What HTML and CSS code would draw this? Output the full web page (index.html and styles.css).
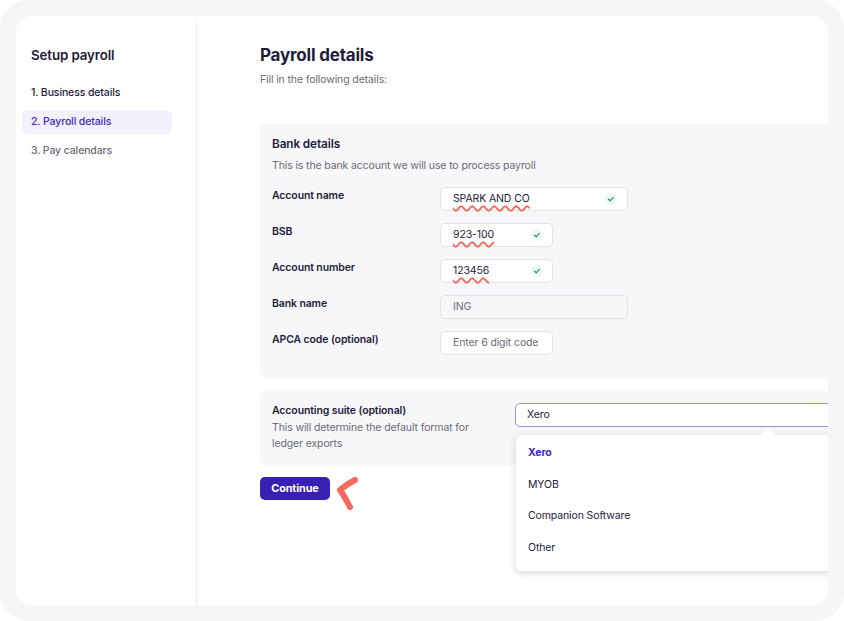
FILE: index.html
```html
<!DOCTYPE html>
<html>
<head>
<meta charset="utf-8">
<link rel="stylesheet" href="styles.css">
</head>
<body>
<div class="frame">
  <div class="panel">
    <aside class="sidebar">
      <h2 class="side-title">Setup payroll</h2>
      <ul class="steps">
        <li class="step">1. Business details</li>
        <li class="step active">2. Payroll details</li>
        <li class="step muted">3. Pay calendars</li>
      </ul>
    </aside>
    <main class="main">
      <h1 class="title">Payroll details</h1>
      <p class="subtitle">Fill in the following details:</p>

      <section class="card bank">
        <h3 class="card-title">Bank details</h3>
        <p class="card-desc">This is the bank account we will use to process payroll</p>
        <div class="rows">
          <div class="row">
            <label class="label">Account name</label>
            <div class="input wide"><span class="val spell">SPARK AND CO</span><span class="check"><svg viewBox="0 0 12 12" width="12" height="12"><circle cx="6" cy="6" r="6" fill="#ebf8f4"/><path d="M3.6 6.2 L5.3 7.8 L8.4 4.4" fill="none" stroke="#2c8c7c" stroke-width="1.2" stroke-linecap="round" stroke-linejoin="round"/></svg></span></div>
          </div>
          <div class="row">
            <label class="label">BSB</label>
            <div class="input narrow"><span class="val spell">923-100</span><span class="check"><svg viewBox="0 0 12 12" width="12" height="12"><circle cx="6" cy="6" r="6" fill="#ebf8f4"/><path d="M3.6 6.2 L5.3 7.8 L8.4 4.4" fill="none" stroke="#2c8c7c" stroke-width="1.2" stroke-linecap="round" stroke-linejoin="round"/></svg></span></div>
          </div>
          <div class="row">
            <label class="label">Account number</label>
            <div class="input narrow"><span class="val spell">123456</span><span class="check"><svg viewBox="0 0 12 12" width="12" height="12"><circle cx="6" cy="6" r="6" fill="#ebf8f4"/><path d="M3.6 6.2 L5.3 7.8 L8.4 4.4" fill="none" stroke="#2c8c7c" stroke-width="1.2" stroke-linecap="round" stroke-linejoin="round"/></svg></span></div>
          </div>
          <div class="row">
            <label class="label">Bank name</label>
            <div class="input wide disabled"><span class="val">ING</span></div>
          </div>
          <div class="row">
            <label class="label">APCA code (optional)</label>
            <div class="input narrow"><span class="val placeholder">Enter 6 digit code</span></div>
          </div>
        </div>
      </section>

      <section class="card suite">
        <div class="suite-text">
          <h4 class="label">Accounting suite (optional)</h4>
          <p class="suite-desc">This will determine the default format for ledger exports</p>
        </div>
        <div class="select-wrap">
          <div class="select">Xero</div>
          <div class="dropdown">
            <span class="caret"></span>
            <ul class="options">
              <li class="option selected">Xero</li>
              <li class="option">MYOB</li>
              <li class="option">Companion Software</li>
              <li class="option">Other</li>
            </ul>
          </div>
        </div>
      </section>

      <div class="actions">
        <button class="btn">Continue</button>
        <svg class="pointer" viewBox="0 0 30 40" width="30" height="40"><path d="M21 5 Q13 9 6 15 Q11 22 16 32" fill="none" stroke="#f46a5c" stroke-width="6" stroke-linecap="round" stroke-linejoin="round"/></svg>
      </div>
    </main>
  </div>
</div>
</body>
</html>
```
FILE: styles.css
```css
* { box-sizing: border-box; }
html, body { margin: 0; padding: 0; background: #ffffff; }
body {
  font-family: Inter, "Noto Sans", sans-serif;
  color: #1e1c3b;
  font-size: 10.5px;
  letter-spacing: -0.12px;
}

.frame {
  width: 844px;
  height: 621px;
  background: #f6f6f9;
  border-radius: 28px;
  padding: 16px;
}
.panel {
  width: 812px;
  height: 589px;
  background: #ffffff;
  border-radius: 16px;
  display: flex;
  overflow: hidden;
}

.sidebar {
  width: 181px;
  flex: none;
  margin-top: 6px;
  border-right: 1px solid #e7e7ec;
  padding: 0 24px 0 6px;
}
.side-title {
  margin: 23px 0 0 9px;
  font-size: 13.3px;
  line-height: 20px;
  font-weight: 600;
  letter-spacing: -0.1px;
}
.steps {
  list-style: none;
  margin: 16px 0 0 0;
  padding: 0;
  display: flex;
  flex-direction: column;
  gap: 5px;
}
.step {
  height: 24px;
  line-height: 24px;
  padding-left: 9px;
  font-size: 10.5px;
  font-weight: 500;
  border-radius: 6px;
  color: #1e1c3b;
}
.step.active { background: #f1f0fb; color: #3b2bbf; }
.step.muted { color: #6b6a76; }

.main {
  flex: none;
  width: 640px;
  padding: 0 0 0 63px;
}
.title {
  margin: 27px 0 0 0;
  font-size: 17px;
  line-height: 24px;
  font-weight: 700;
  letter-spacing: -0.2px;
}
.subtitle {
  margin: 5px 0 0 0;
  line-height: 16px;
  color: #6b6a76;
}

.card {
  background: #f7f7f9;
  border-radius: 6px;
  width: 600px;
}
.bank {
  margin-top: 36px;
  padding: 12px 12px 23px 12px;
}
.card-title {
  margin: 0;
  font-size: 11.8px;
  line-height: 16px;
  font-weight: 600;
}
.card-desc {
  margin: 6px 0 0 0;
  line-height: 16px;
  color: #6b6a76;
}
.rows {
  margin-top: 13px;
  display: flex;
  flex-direction: column;
  gap: 12px;
}
.row { display: flex; align-items: flex-start; }
.label {
  width: 168px;
  flex: none;
  margin: 1px 0 0 0;
  font-size: 10.5px;
  line-height: 16px;
  font-weight: 600;
  color: #1e1c3b;
}
.input {
  height: 24px;
  background: #ffffff;
  border: 1px solid #e2e2e8;
  border-radius: 5px;
  padding: 0 10px 0 12px;
  display: flex;
  align-items: center;
  justify-content: space-between;
  color: #1e1c3b;
  white-space: nowrap;
}
.input.wide { width: 188px; }
.input.narrow { width: 113px; padding-right: 9px; }
.input.disabled { background: #f7f7f9; color: #6b6a76; }
.val { line-height: 16px; }
.spell {
  text-decoration: underline wavy #f46a5c;
  text-decoration-thickness: 1.8px;
  text-underline-offset: 3px;
}
.placeholder { color: #6b6a76; }
.check { display: flex; align-items: center; }

.suite {
  margin-top: 13px;
  padding: 12px 0 13px 12px;
  display: flex;
  align-items: flex-start;
}
.suite-text { width: 243px; flex: none; }
.suite-text .label { width: auto; margin-top: 0; }
.suite-desc {
  margin: 1px 0 0 0;
  line-height: 16px;
  color: #6b6a76;
  width: 215px;
}
.select-wrap { position: relative; flex: 1; }
.select {
  height: 24px;
  border: 1px solid #9a8ee6;
  border-radius: 5px;
  background: #ffffff;
  padding-left: 11px;
  line-height: 22px;
  color: #1e1c3b;
}
.dropdown {
  position: absolute;
  left: 1px;
  top: 32px;
  width: 400px;
  background: #ffffff;
  border-radius: 6px;
  box-shadow: 0 2px 8px rgba(20, 20, 40, 0.16);
  z-index: 5;
}
.caret {
  position: absolute;
  top: -5px;
  left: 247px;
  width: 10px;
  height: 10px;
  background: #ffffff;
  transform: rotate(45deg);
}
.options {
  position: relative;
  list-style: none;
  margin: 0;
  padding: 2px 0 8px 0;
}
.option {
  height: 31.5px;
  line-height: 31.5px;
  padding-left: 12px;
  color: #1e1c3b;
}
.option.selected { color: #3b2bbf; font-weight: 700; }

.actions {
  position: relative;
  margin-top: 12px;
  display: flex;
}
.btn {
  width: 70px;
  height: 23px;
  border: none;
  border-radius: 5px;
  background: #3920b3;
  color: #ffffff;
  font-family: Inter, "Noto Sans", sans-serif;
  font-size: 10.8px;
  font-weight: 700;
  letter-spacing: -0.1px;
  padding: 0;
}
.pointer {
  position: absolute;
  left: 74px;
  top: -2px;
}
```
